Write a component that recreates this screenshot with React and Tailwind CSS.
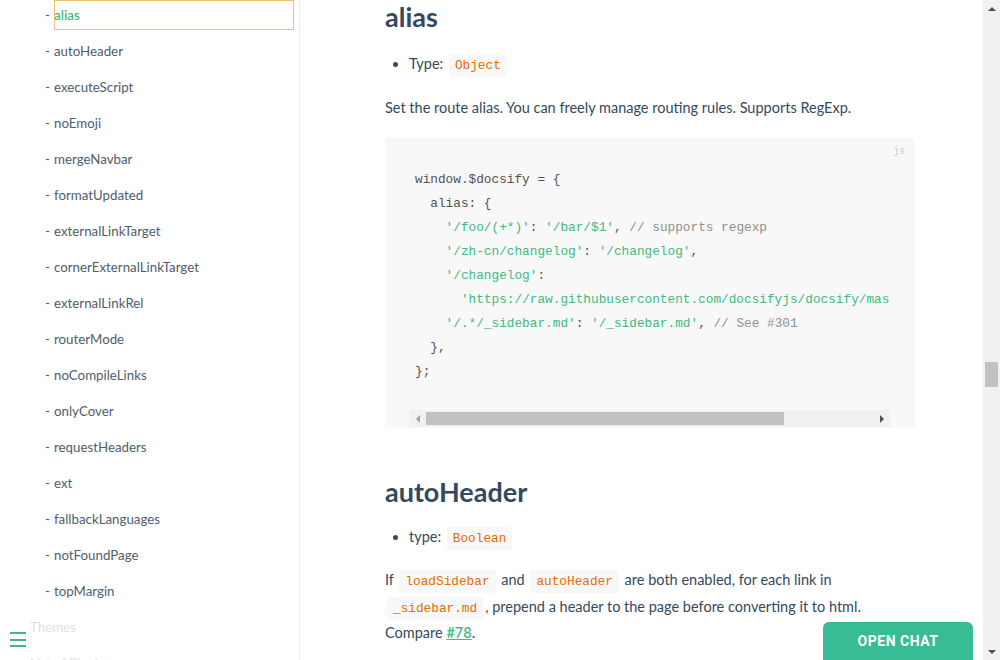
const navItems = [
  'alias',
  'autoHeader',
  'executeScript',
  'noEmoji',
  'mergeNavbar',
  'formatUpdated',
  'externalLinkTarget',
  'cornerExternalLinkTarget',
  'externalLinkRel',
  'routerMode',
  'noCompileLinks',
  'onlyCover',
  'requestHeaders',
  'ext',
  'fallbackLanguages',
  'notFoundPage',
  'topMargin',
]

const S = ({ children }) => <span className="text-[#42b983]">{children}</span>
const C = ({ children }) => <span className="text-[#8e908c]">{children}</span>

function Sidebar() {
  return (
    <aside className="relative w-[300px] shrink-0 h-full border-r border-[#eeeeee] overflow-hidden">
      <ul className="pr-[5px] text-[13.3px] text-[#505d6b]">
        {navItems.map((item, i) => (
          <li key={item} className="flex h-[30px] mb-[6px] items-center pl-[45px]">
            <span className="w-[9px] pt-[2px]">-</span>
            {i === 0 ? (
              <a className="flex-1 h-[30px] flex items-center pt-[2px] outline outline-1 outline-[#f0c36d] -outline-offset-1 border-r border-[#42b983] font-semibold text-[#42b983]">
                {item}
              </a>
            ) : (
              <a className="flex-1 pt-[2px]">{item}</a>
            )}
          </li>
        ))}
        <li className="flex h-[30px] mb-[6px] items-center pt-[2px] pl-[30px]">Themes</li>
        <li className="flex h-[30px] mb-[6px] items-center pt-[2px] pl-[30px]">List of Plugins</li>
      </ul>
      <div className="absolute left-0 bottom-0 w-[284px] h-[50px] bg-white/80">
        <div className="absolute left-[10px] top-[22px] w-[16px] flex flex-col gap-[4.5px]">
          <span className="block h-[2px] bg-[#42b983]" />
          <span className="block h-[2px] bg-[#42b983]" />
          <span className="block h-[2px] bg-[#42b983]" />
        </div>
      </div>
    </aside>
  )
}

function Code({ children }) {
  return (
    <code className="bg-[#f8f8f8] text-[#e96900] rounded-[2px] px-[6px] py-[4px] mx-[2px] text-[12.75px] leading-none font-['Liberation_Mono',monospace]">
      {children}
    </code>
  )
}

function CodeBlock() {
  return (
    <div className="relative mt-[17px] bg-[#f8f8f8] pb-px">
      <span className="absolute right-[10px] top-[6px] text-[10px] text-[#cccccc] font-['Liberation_Mono',monospace]">js</span>
      <div className="ml-[24px] w-[481px] overflow-hidden">
        <pre className="pt-[30px] pb-[26px] pl-[6px] h-[272px] text-[12.75px] leading-[24px] text-[#525252] font-['Liberation_Mono',monospace] whitespace-pre">
{`window.$docsify = {
  alias: {
    `}<S>'/foo/(+*)'</S>: <S>'/bar/$1'</S>, <C>// supports regexp</C>{`
    `}<S>'/zh-cn/changelog'</S>: <S>'/changelog'</S>,{`
    `}<S>'/changelog'</S>:{`
      `}<S>'https://raw.githubusercontent.com/docsifyjs/docsify/master/CHANGELOG'</S>,{`
    `}<S>'/.*/_sidebar.md'</S>: <S>'/_sidebar.md'</S>, <C>// See #301</C>{`
  },
};`}
        </pre>
        <div className="flex items-center h-[17px] bg-[#f1f1f1]">
          <div className="w-[17px] flex justify-center">
            <span className="block w-0 h-0 border-y-[4px] border-y-transparent border-r-[4px] border-r-[#a3a3a3]" />
          </div>
          <div className="w-[358px] h-[13px] bg-[#c1c1c1]" />
          <div className="flex-1" />
          <div className="w-[17px] flex justify-center">
            <span className="block w-0 h-0 border-y-[4px] border-y-transparent border-l-[4px] border-l-[#505050]" />
          </div>
        </div>
      </div>
    </div>
  )
}

function Main() {
  return (
    <main className="flex-1 h-full overflow-hidden pl-[85px] text-[14.5px] text-[#34495e]">
      <div className="w-[530px]">
        <h2 className="h-[34px] leading-[34px] text-[27px] font-bold">alias</h2>
        <ul className="mt-[17px] h-[26px] pl-[24px] list-disc leading-[26px]">
          <li>
            Type: <Code>Object</Code>
          </li>
        </ul>
        <p className="mt-[18px] h-[26px] leading-[26px]">Set the route alias. You can freely manage routing rules. Supports RegExp.</p>
        <CodeBlock />
        <h2 className="mt-[47px] h-[34px] leading-[34px] text-[27px] font-bold">autoHeader</h2>
        <ul className="mt-[15px] h-[26px] pl-[24px] list-disc leading-[26px]">
          <li>
            type: <Code>Boolean</Code>
          </li>
        </ul>
        <p className="mt-[17px] leading-[26.5px]">
          If <Code>loadSidebar</Code> and <Code>autoHeader</Code> are both enabled, for each link in{' '}
          <Code>_sidebar.md</Code>, prepend a header to the page before converting it to html. Compare{' '}
          <a className="text-[#42b983] underline font-semibold">#78</a>.
        </p>
      </div>
    </main>
  )
}

function PageScrollbar() {
  return (
    <div className="w-[17px] h-full bg-[#f1f1f1] flex flex-col items-center">
      <div className="h-[17px] flex items-center">
        <span className="block w-0 h-0 border-x-[4px] border-x-transparent border-b-[4px] border-b-[#505050]" />
      </div>
      <div className="flex-1 w-full px-[2px]">
        <div className="mt-[345px] h-[25px] bg-[#c1c1c1]" />
      </div>
      <div className="h-[17px] flex items-center">
        <span className="block w-0 h-0 border-x-[4px] border-x-transparent border-t-[4px] border-t-[#505050]" />
      </div>
    </div>
  )
}

export default function App() {
  return (
    <div className="relative w-[1000px] h-[660px] overflow-hidden bg-white flex font-['Lato',sans-serif]">
      <Sidebar />
      <Main />
      <PageScrollbar />
      <button className="absolute left-[823px] top-[622px] w-[150px] h-[46px] rounded-t-[6px] bg-[#38bc95] text-white text-[14px] font-bold tracking-[0.5px] pb-[8px] font-['Roboto',sans-serif]">
        OPEN CHAT
      </button>
    </div>
  )
}
